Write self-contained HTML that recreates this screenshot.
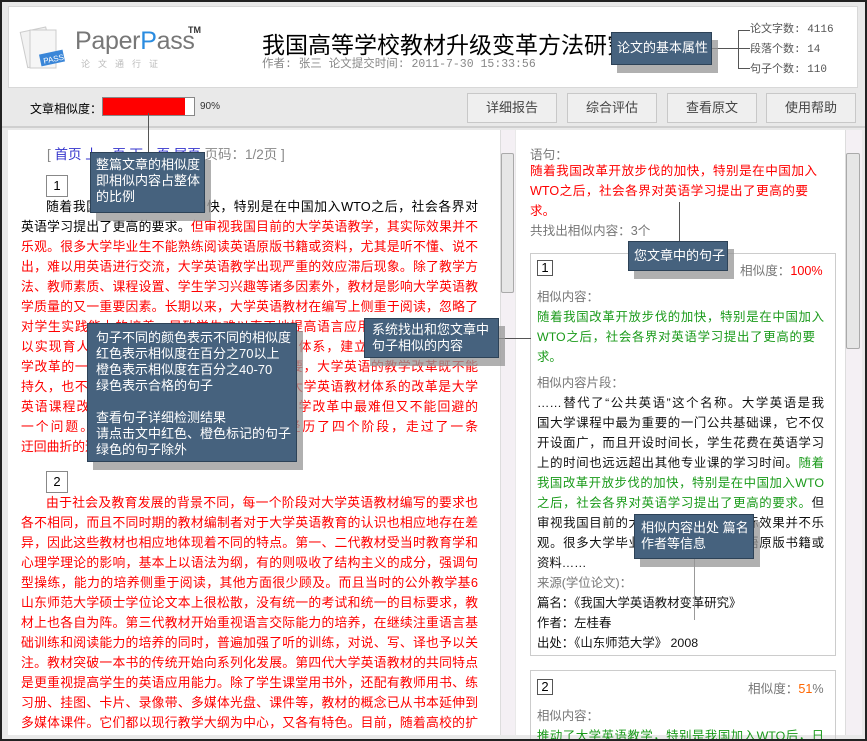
<!DOCTYPE html>
<html><head><meta charset="utf-8"><style>
*{margin:0;padding:0;box-sizing:border-box}
html,body{width:867px;height:741px;overflow:hidden}
body{background:#e9e9e9;font-family:"Liberation Sans","Noto Sans CJK SC",sans-serif;position:relative}
.a{position:absolute}
.hdr{left:8px;top:6px;width:850px;height:82px;background:#fff;border:1px solid #d8d8d8}
.btn{top:93px;height:30px;width:90px;background:#efefef;border:1px solid #c8c8c8;font-size:13px;color:#444;text-align:center;line-height:28px}
.ln{position:absolute;left:21px;width:457px;font-size:12.8px;line-height:20px;height:20px;white-space:nowrap;text-align:justify;text-align-last:justify;color:#f00;overflow:hidden}
.ln.i{left:46px;width:432px}
.k{color:#000}
.rl{position:absolute;left:530px;width:287px;font-size:12.6px;line-height:20px;height:20px;white-space:nowrap;text-align:justify;text-align-last:justify}
.cl{position:absolute;left:537px;width:287px;font-size:12.4px;line-height:20px;height:20px;white-space:nowrap;text-align:justify;text-align-last:justify;color:#111}
.g{color:#1a9a1a}.gr{color:#777}.r{color:#f00}
.tip{position:absolute;background:#46627e;color:#fff;border:1px solid #2d4257;box-shadow:6px 8px 0 rgba(150,150,150,.75);font-size:13px;line-height:16px;padding:4px 6px;white-space:nowrap;overflow:hidden}
.vl{position:absolute;width:1px;background:#555}
.hl{position:absolute;height:1px;background:#555}
.nb{position:absolute;border:1px solid #888;font-size:13px;text-align:center;background:#fff}
.frame{left:0;top:0;width:867px;height:741px;border:2px solid #222;pointer-events:none}
</style></head><body>
<div class="a hdr"></div>
<svg class="a" style="left:18px;top:22px" width="50" height="52"><g transform="rotate(-12 25 26)"><rect x="6" y="6" width="26" height="36" fill="#f2f2f2" stroke="#ccc"/></g><rect x="12" y="8" width="26" height="38" fill="#f6f6f6" stroke="#ccc"/><rect x="22" y="30" width="24" height="12" fill="#3a86d8" transform="rotate(-12 34 36)"/><text x="25" y="40" font-size="8" fill="#fff" font-family="Liberation Sans" transform="rotate(-12 34 36)">PASS</text></svg>
<div class="a" style="left:75px;top:27px;font-size:25px;color:#777;letter-spacing:-.3px">Paper<span style="color:#2a8ce0">P</span>ass</div>
<div class="a" style="left:188px;top:25px;font-size:9px;color:#333;font-weight:bold">TM</div>
<div class="a" style="left:81px;top:57px;font-size:9px;color:#bbb;letter-spacing:8px">论文通行证</div>
<div class="a" style="left:262px;top:26px;font-size:23px;color:#000">我国高等学校教材升级变革方法研究</div>
<div class="a" style="left:262px;top:55px;font-size:11.5px;color:#888;font-family:'Liberation Mono','Noto Sans CJK SC',monospace">作者: 张三 论文提交时间: 2011-7-30 15:33:56</div>
<div class="a" style="left:750px;top:20px;font-size:11px;color:#555;line-height:20px;font-family:'Liberation Mono','Noto Sans CJK SC',monospace">论文字数: 4116<br>段落个数: 14<br>句子个数: 110</div>
<div class="vl" style="left:738px;top:30px;height:39px"></div>
<div class="hl" style="left:738px;top:30px;width:12px"></div><div class="hl" style="left:712px;top:48px;width:38px"></div><div class="hl" style="left:738px;top:68px;width:12px"></div>
<div class="tip" style="left:611px;top:32px;width:101px;height:33px;padding:7px 5px">论文的基本属性</div>
<div class="a" style="left:30px;top:100px;font-size:12px;color:#000">文章相似度：</div>
<div class="a" style="left:102px;top:97px;width:93px;height:19px;border:1px solid #888;background:#fff"><div style="width:82px;height:17px;background:#f00"></div></div>
<div class="a" style="left:200px;top:101px;font-size:10px;color:#333">90%</div>
<div class="a btn" style="left:467px">详细报告</div><div class="a btn" style="left:567px">综合评估</div><div class="a btn" style="left:667px">查看原文</div><div class="a btn" style="left:766px">使用帮助</div>
<div class="a" style="left:2px;top:126px;width:863px;height:2px;background:#cfcfcf"></div>
<div class="a" style="left:8px;top:130px;width:492px;height:605px;background:#fff"></div>
<div class="a" style="left:500px;top:130px;width:15px;height:605px;background:#f4f0f4;border-left:1px solid #ddd"></div>
<div class="a" style="left:501px;top:153px;width:13px;height:140px;background:#e6e6e6;border:1px solid #aaa;border-radius:2px"></div>
<div class="a" style="left:516px;top:130px;width:330px;height:605px;background:#fff"></div>
<div class="a" style="left:845px;top:130px;width:17px;height:605px;background:#f4f0f4;border-left:1px solid #ddd"></div>
<div class="a" style="left:846px;top:153px;width:14px;height:196px;background:#e6e6e6;border:1px solid #aaa;border-radius:2px"></div>
<div class="a" style="left:47px;top:143px;font-size:13.5px;color:#888">[ <span style="color:#33c">首页 上一页 下一页 尾页</span> 页码：1/2页 ]</div>
<div class="nb" style="left:46px;top:175px;width:22px;height:22px;line-height:20px">1</div>
<div class="ln i" style="top:197px"><span class="k">随着我国改革开放步伐的加快，特别是在中国加入WTO之后，社会各界对</span></div>
<div class="ln" style="top:217px"><span class="k">英语学习提出了更高的要求。</span>但审视我国目前的大学英语教学，其实际效果并不</div>
<div class="ln" style="top:237px">乐观。很多大学毕业生不能熟练阅读英语原版书籍或资料，尤其是听不懂、说不</div>
<div class="ln" style="top:257px">出，难以用英语进行交流，大学英语教学出现严重的效应滞后现象。除了教学方</div>
<div class="ln" style="top:277px">法、教师素质、课程设置、学生学习兴趣等诸多因素外，教材是影响大学英语教</div>
<div class="ln" style="top:297px">学质量的又一重要因素。长期以来，大学英语教材在编写上侧重于阅读，忽略了</div>
<div class="ln" style="top:317px">对学生实践能力的培养，导致学生难以真正地提高语言应用能力，因而也就难</div>
<div class="ln" style="top:337px">以实现育人的根本目标。因此，改革旧的教材体系，建立新的教材体系是教</div>
<div class="ln" style="top:357px">学改革的一项重要内容。如果教材不能适应需要，大学英语的教学改革既不能</div>
<div class="ln" style="top:377px">持久，也不可能真正深入。从这个意义上说，大学英语教材体系的改革是大学</div>
<div class="ln" style="top:397px">英语课程改革的重要组成部分，是大学英语教学改革中最难但又不能回避的</div>
<div class="ln" style="top:417px">一个问题。建国以来，我国大学英语教材经历了四个阶段，走过了一条</div>
<div class="ln" style="top:437px;text-align-last:left">迂回曲折的道路。</div>
<div class="nb" style="left:46px;top:471px;width:22px;height:22px;line-height:20px">2</div>
<div class="ln i" style="top:493px">由于社会及教育发展的背景不同，每一个阶段对大学英语教材编写的要求也</div>
<div class="ln" style="top:513px">各不相同，而且不同时期的教材编制者对于大学英语教育的认识也相应地存在差</div>
<div class="ln" style="top:533px">异，因此这些教材也相应地体现着不同的特点。第一、二代教材受当时教育学和</div>
<div class="ln" style="top:553px">心理学理论的影响，基本上以语法为纲，有的则吸收了结构主义的成分，强调句</div>
<div class="ln" style="top:573px">型操练，能力的培养侧重于阅读，其他方面很少顾及。而且当时的公外教学基6</div>
<div class="ln" style="top:593px">山东师范大学硕士学位论文本上很松散，没有统一的考试和统一的目标要求，教</div>
<div class="ln" style="top:613px">材上也各自为阵。第三代教材开始重视语言交际能力的培养，在继续注重语言基</div>
<div class="ln" style="top:633px">础训练和阅读能力的培养的同时，普遍加强了听的训练，对说、写、译也予以关</div>
<div class="ln" style="top:653px">注。教材突破一本书的传统开始向系列化发展。第四代大学英语教材的共同特点</div>
<div class="ln" style="top:673px">是更重视提高学生的英语应用能力。除了学生课堂用书外，还配有教师用书、练</div>
<div class="ln" style="top:693px">习册、挂图、卡片、录像带、多媒体光盘、课件等，教材的概念已从书本延伸到</div>
<div class="ln" style="top:713px">多媒体课件。它们都以现行教学大纲为中心，又各有特色。目前，随着高校的扩</div>
<div class="a gr" style="left:530px;top:144px;font-size:12.6px">语句：</div>
<div class="rl r" style="top:161px">随着我国改革开放步伐的加快，特别是在中国加入</div>
<div class="rl r" style="top:181px;width:278px">WTO之后，社会各界对英语学习提出了更高的要</div>
<div class="rl r" style="top:201px;text-align-last:left">求。</div>
<div class="rl gr" style="top:221px;text-align-last:left">共找出相似内容：3个</div>
<div class="a" style="left:530px;top:253px;width:306px;height:403px;border:1px solid #ccc"></div>
<div class="nb" style="left:537px;top:260px;width:16px;height:16px;line-height:14px;border-color:#555;color:#000">1</div>
<div class="a gr" style="left:740px;top:260px;font-size:12.6px">相似度：<span class="r">100%</span></div>
<div class="cl gr" style="top:287px;text-align-last:left">相似内容：</div>
<div class="cl g" style="top:307px">随着我国改革开放步伐的加快，特别是在中国加入</div>
<div class="cl g" style="top:327px;width:278px">WTO之后，社会各界对英语学习提出了更高的要</div>
<div class="cl g" style="top:347px;text-align-last:left">求。</div>
<div class="cl gr" style="top:373px;text-align-last:left">相似内容片段：</div>
<div class="cl" style="top:393px">……替代了“公共英语”这个名称。大学英语是我</div>
<div class="cl" style="top:413px">国大学课程中最为重要的一门公共基础课，它不仅</div>
<div class="cl" style="top:433px">开设面广，而且开设时间长，学生花费在英语学习</div>
<div class="cl" style="top:453px">上的时间也远远超出其他专业课的学习时间。<span class="g">随着</span></div>
<div class="cl g" style="top:473px">我国改革开放步伐的加快，特别是在中国加入WTO</div>
<div class="cl" style="top:493px"><span class="g">之后，社会各界对英语学习提出了更高的要求。</span>但</div>
<div class="cl" style="top:513px">审视我国目前的大学英语教学，其实际效果并不乐</div>
<div class="cl" style="top:533px">观。很多大学毕业生不能熟练阅读英语原版书籍或</div>
<div class="cl" style="top:553px;text-align-last:left">资料……</div>
<div class="cl gr" style="top:573px;text-align-last:left">来源(学位论文)：</div>
<div class="cl" style="top:593px;text-align-last:left">篇名：《我国大学英语教材变革研究》</div>
<div class="cl" style="top:613px;text-align-last:left">作者：左桂春</div>
<div class="cl" style="top:633px;text-align-last:left">出处：《山东师范大学》 2008</div>
<div class="a" style="left:530px;top:670px;width:306px;height:80px;border:1px solid #ccc"></div>
<div class="nb" style="left:537px;top:679px;width:16px;height:16px;line-height:14px;border-color:#555;color:#000">2</div>
<div class="a gr" style="left:748px;top:678px;font-size:12.6px">相似度：<span style="color:#f60">51</span>%</div>
<div class="cl gr" style="top:706px;text-align-last:left">相似内容：</div>
<div class="cl g" style="top:726px">推动了大学英语教学，特别是我国加入WTO后，日</div>
<div class="vl" style="left:148px;top:113px;height:40px"></div>
<div class="tip" style="left:90px;top:152px;width:115px;height:61px;padding:4px 5px">整篇文章的相似度<br>即相似内容占整体<br>的比例</div>
<div class="tip" style="left:87px;top:323px;width:210px;height:139px;padding:6px 8px">句子不同的颜色表示不同的相似度<br>红色表示相似度在百分之70以上<br>橙色表示相似度在百分之40-70<br>绿色表示合格的句子<br><br>查看句子详细检测结果<br>请点击文中红色、橙色标记的句子<br>绿色的句子除外</div>
<div class="hl" style="left:499px;top:338px;width:32px"></div>
<div class="tip" style="left:364px;top:318px;width:135px;height:40px;padding:3px 7px">系统找出和您文章中<br>句子相似的内容</div>
<div class="vl" style="left:679px;top:202px;height:40px"></div>
<div class="tip" style="left:628px;top:241px;width:100px;height:30px;padding:6px 5px">您文章中的句子</div>
<div class="vl" style="left:694px;top:558px;height:62px;background:#999"></div>
<div class="tip" style="left:634px;top:514px;width:120px;height:45px;padding:5px 6px">相似内容出处 篇名<br>作者等信息</div>
<div class="a frame"></div>
</body></html>
